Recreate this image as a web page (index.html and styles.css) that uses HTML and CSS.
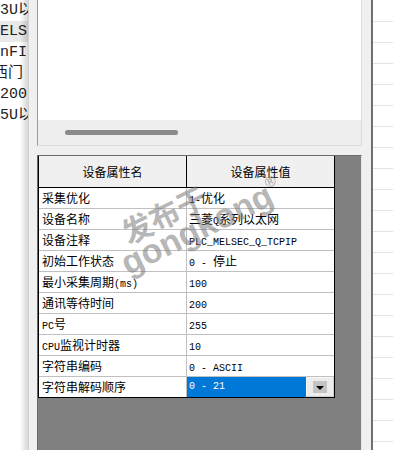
FILE: index.html
```html
<!DOCTYPE html>
<html lang="zh-CN">
<head>
    <meta charset="UTF-8">
    <meta name="viewport" content="width=device-width, initial-scale=1.0">
    <title>设备属性</title>
    <link rel="stylesheet" href="styles.css">
</head>
<body>
    <div class="list-left">
        <div class="item">3U以</div>
        <div class="item sel">ELS</div>
        <div class="item">nFI</div>
        <div class="item cut">西门</div>
        <div class="item">200</div>
        <div class="item">5U以</div>
    </div><!--list-left-->

    <div class="panel">
        <div class="box">
            <div class="box-body"></div>
            <div class="hscroll"><div class="thumb"></div></div>
        </div><!--box-->

        <div class="grid">
            <div class="table">
                <div class="row head">
                    <div class="name">设备属性名</div>
                    <div class="val">设备属性值</div>
                </div>
                <div class="row">
                    <div class="name">采集优化</div>
                    <div class="val"><span class="en">1-</span>优化</div>
                </div>
                <div class="row">
                    <div class="name">设备名称</div>
                    <div class="val">三菱<span class="en">Q</span>系列以太网</div>
                </div>
                <div class="row">
                    <div class="name">设备注释</div>
                    <div class="val"><span class="en">PLC_MELSEC_Q_TCPIP</span></div>
                </div>
                <div class="row">
                    <div class="name">初始工作状态</div>
                    <div class="val"><span class="en">0 - </span>停止</div>
                </div>
                <div class="row">
                    <div class="name">最小采集周期<span class="en">(ms)</span></div>
                    <div class="val"><span class="en">100</span></div>
                </div>
                <div class="row">
                    <div class="name">通讯等待时间</div>
                    <div class="val"><span class="en">200</span></div>
                </div>
                <div class="row">
                    <div class="name"><span class="en">PC</span>号</div>
                    <div class="val"><span class="en">255</span></div>
                </div>
                <div class="row">
                    <div class="name"><span class="en">CPU</span>监视计时器</div>
                    <div class="val"><span class="en">10</span></div>
                </div>
                <div class="row">
                    <div class="name">字符串编码</div>
                    <div class="val"><span class="en">0 - ASCII</span></div>
                </div>
                <div class="row">
                    <div class="name">字符串解码顺序</div>
                    <div class="val active">
                        <span class="en">0 - 21</span>
                        <div class="drop"><div class="drop-in"></div></div>
                    </div>
                </div>
            </div><!--table-->
        </div><!--grid-->
    </div><!--panel-->

    <div class="list-right">
        <div></div><div></div><div></div><div></div><div></div>
        <div></div><div></div><div></div><div></div><div></div>
        <div></div><div></div><div></div><div></div><div></div>
        <div></div><div></div><div></div><div></div><div></div>
        <div></div><div></div>
    </div><!--list-right-->

    <div class="watermark">
        <div class="wm-cn">发布于</div>
        <div class="wm-en">gongkong<sup>®</sup></div>
    </div>
</body>
</html>
```

FILE: styles.css
```css
*{
    padding: 0;
    margin: 0;
    box-sizing: border-box;
}
body{
    width: 393px;
    height: 450px;
    overflow: hidden;
    display: flex;
    position: relative;
    font-family: "Noto Sans CJK SC", sans-serif;
    font-size: 12px;
    color: #000;
    background-color: #f0f0f0;
}

/* lista da esquerda, cortada */
.list-left{
    width: 29px;
    flex-shrink: 0;
    background-color: #fff;
    border-right: 1px solid #d2d2d2;
    overflow: hidden;
    position: relative;
    font-family: "Liberation Mono", "Noto Sans CJK SC", monospace;
    font-size: 15px;
    color: #222;
}
.list-left::after{
    content: "";
    position: absolute;
    top: 0;
    right: 0;
    width: 8px;
    height: 100%;
    background: linear-gradient(to right, rgba(0,0,0,0), rgba(0,0,0,0.16));
}
.list-left .item{
    height: 21px;
    line-height: 21px;
    white-space: nowrap;
}
.list-left .sel{
    background-color: #e9e9e9;
}
.list-left .cut{
    margin-left: -7px;
}

.panel{
    flex: 1;
    display: flex;
    flex-direction: column;
    gap: 9px;
    padding: 0 9px 0 8px;
    border-right: 2px solid #707070;
    background-color: #f0f0f0;
}

.box{
    height: 146px;
    flex-shrink: 0;
    display: flex;
    flex-direction: column;
    border-left: 1px solid #9a9a9a;
    border-right: 1px solid #dcdcdc;
    border-bottom: 1px solid #dcdcdc;
}
.box-body{
    flex: 1;
    background-color: #fff;
}
.hscroll{
    height: 25px;
    padding: 10px 0 0 27px;
    background-color: #eeeeee;
}
.thumb{
    width: 113px;
    height: 5px;
    border-radius: 3px;
    background-color: #8a8a8a;
}

.grid{
    flex: 1;
    background-color: #808080;
    border-top: 1px solid #6a6a6a;
    border-left: 1px solid #6a6a6a;
    border-right: 1px solid #e3e3e3;
}
.table{
    width: 297px;
    background-color: #fff;
    border-left: 1px solid #000;
    border-right: 1px solid #000;
}
.row{
    display: flex;
    height: 21px;
    line-height: 20px;
    border-bottom: 1px solid #c0c0c0;
    white-space: nowrap;
}
.row:last-child{
    border-bottom-color: #000;
}
.row .name{
    width: 148px;
    padding-left: 3px;
    border-right: 1px solid #c0c0c0;
}
.row .val{
    flex: 1;
    padding-left: 2px;
}
.row.head{
    height: 32px;
    line-height: 31px;
    background-color: #f0f0f0;
    border-bottom-color: #000;
}
.row.head .name{
    text-align: center;
    padding-left: 0;
    border-right-color: #000;
}
.row.head .val{
    text-align: center;
    padding-left: 0;
}

.en{
    font-family: "Liberation Mono", monospace;
    font-size: 10px;
}

.val.active{
    display: flex;
    justify-content: space-between;
    align-items: center;
    background-color: #0078d7;
    color: #fff;
}
.drop{
    width: 28px;
    height: 20px;
    display: flex;
    align-items: center;
    justify-content: center;
    background-color: #ececec;
    border: 1px solid #f8f8f8;
    border-right-color: #d0d0d0;
    border-bottom-color: #d0d0d0;
}
.drop-in{
    width: 14px;
    height: 12px;
    background-color: #c4c4c4;
    position: relative;
}
.drop-in::after{
    content: "";
    position: absolute;
    left: 3px;
    top: 5px;
    border-left: 4px solid transparent;
    border-right: 4px solid transparent;
    border-top: 4px solid #000;
}

.list-right{
    width: 20px;
    flex-shrink: 0;
    padding-top: 1px;
    background-color: #fff;
}
.list-right div{
    height: 21px;
    border-bottom: 1px solid #e3e3e3;
}

/* marca d'agua por cima da tabela */
.watermark{
    position: absolute;
    left: 104px;
    top: 226px;
    transform: rotate(-26deg);
    transform-origin: left top;
    color: rgba(120, 120, 120, 0.55);
    font-weight: bold;
    line-height: 1;
    pointer-events: none;
    white-space: nowrap;
}
.wm-cn{
    font-family: "Noto Sans CJK SC", sans-serif;
    font-size: 30px;
    padding-left: 14px;
}
.wm-en{
    font-family: "Liberation Sans", sans-serif;
    font-size: 34px;
    margin-top: -5px;
}
.wm-en sup{
    font-size: 15px;
    vertical-align: 17px;
    margin-left: -1px;
}
```
